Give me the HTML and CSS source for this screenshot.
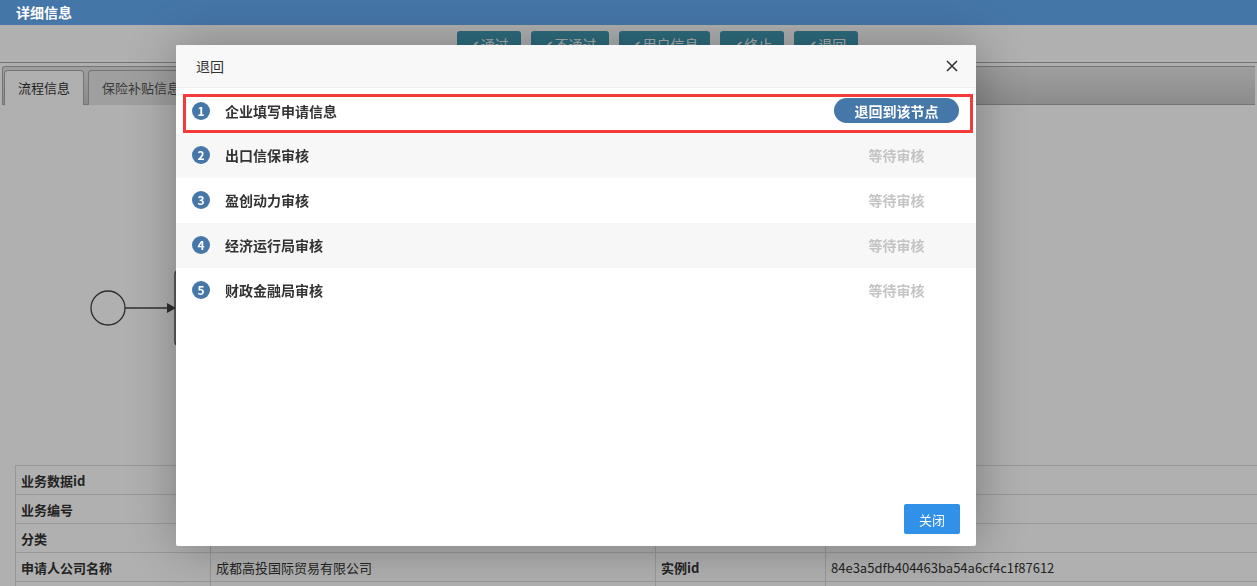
FILE: index.html
```html
<!DOCTYPE html>
<html lang="zh-CN">
<head>
  <meta charset="UTF-8">
  <title>详细信息</title>
  <link rel="stylesheet" href="styles.css">
</head>
<body>
  <div class="title-bar">详细信息</div>

  <div class="content">
    <div class="toolbar">
      <button class="tool-btn"><span class="tick">✔</span>通过</button>
      <button class="tool-btn"><span class="tick">✔</span>不通过</button>
      <button class="tool-btn"><span class="tick">✔</span>用户信息</button>
      <button class="tool-btn"><span class="tick">✔</span>终止</button>
      <button class="tool-btn"><span class="tick">✔</span>退回</button>
    </div>

    <div class="tabs">
      <ul class="tab-nav">
        <li class="tab active">流程信息</li>
        <li class="tab">保险补贴信息</li>
      </ul>
      <div class="tab-panel">
        <svg class="flow" viewBox="0 0 1253 360" width="1253" height="360">
          <circle cx="106" cy="203" r="17" fill="none" stroke="#444" stroke-width="1.3"/>
          <line x1="123" y1="203" x2="166" y2="203" stroke="#444" stroke-width="1.3"/>
          <polygon points="165,198 174,203 165,208" fill="#444"/>
          <rect x="173" y="165" width="120" height="76" rx="4" fill="#fff" stroke="#444" stroke-width="1.3"/>
        </svg>

        <table class="info">
          <tr>
            <th>业务数据id</th><td></td><th></th><td></td>
          </tr>
          <tr>
            <th>业务编号</th><td></td><th></th><td></td>
          </tr>
          <tr>
            <th>分类</th><td></td><th></th><td></td>
          </tr>
          <tr>
            <th>申请人公司名称</th><td>成都高投国际贸易有限公司</td><th>实例id</th><td>84e3a5dfb404463ba54a6cf4c1f87612</td>
          </tr>
          <tr>
            <th></th><td></td><th></th><td></td>
          </tr>
        </table>
      </div>
    </div>

    <div class="mask"></div>
  </div>

  <div class="modal">
    <div class="modal-header">
      <span class="modal-title">退回</span>
      <svg class="modal-close" viewBox="0 0 12 12" width="12" height="12">
        <path d="M1 1 L11 11 M11 1 L1 11" stroke="#333" stroke-width="1.6" fill="none"/>
      </svg>
    </div>

    <ul class="steps">
      <li class="step current">
        <span class="step-no">1</span>
        <span class="step-name">企业填写申请信息</span>
        <span class="step-side"><button class="back-btn">退回到该节点</button></span>
      </li>
      <li class="step">
        <span class="step-no">2</span>
        <span class="step-name">出口信保审核</span>
        <span class="step-side wait">等待审核</span>
      </li>
      <li class="step">
        <span class="step-no">3</span>
        <span class="step-name">盈创动力审核</span>
        <span class="step-side wait">等待审核</span>
      </li>
      <li class="step">
        <span class="step-no">4</span>
        <span class="step-name">经济运行局审核</span>
        <span class="step-side wait">等待审核</span>
      </li>
      <li class="step">
        <span class="step-no">5</span>
        <span class="step-name">财政金融局审核</span>
        <span class="step-side wait">等待审核</span>
      </li>
    </ul>

    <div class="modal-footer">
      <button class="close-btn">关闭</button>
    </div>
  </div>
</body>
</html>
```

FILE: styles.css
```css
* {
  margin: 0;
  padding: 0;
  box-sizing: border-box;
}

body {
  font-family: "Noto Sans CJK SC", "Noto Sans", "DejaVu Sans", sans-serif;
  color: #333;
  background-color: #fff;
  width: 1257px;
  height: 586px;
  overflow: hidden;
}

.title-bar {
  height: 25px;
  line-height: 25px;
  padding-left: 16px;
  background-color: #4576a8;
  color: #fff;
  font-size: 14px;
  font-weight: bold;
  position: relative;
  z-index: 3;
}

.content {
  position: relative;
  height: 561px;
}

.toolbar {
  height: 38px;
  display: flex;
  justify-content: center;
  gap: 10px;
  padding: 6px 0 0 58px;
  border-bottom: 1px solid #aaa;
}

.tool-btn {
  height: 26px;
  padding: 0 12px;
  border: none;
  border-radius: 3px;
  background-color: #429db7;
  color: #fff;
  font-family: inherit;
  font-size: 14px;
}

.tick {
  font-family: "DejaVu Sans", sans-serif;
  font-size: 13px;
  margin-right: 1px;
}

.tabs {
  margin: 3px 2px 0;
}

.tab-nav {
  list-style: none;
  display: flex;
  gap: 4px;
  height: 39px;
  padding: 3px 0 0 1px;
  border: 1px solid #aaa;
  border-right: none;
  border-radius: 3px 0 0 0;
  background: linear-gradient(#e6e6e6, #cacaca);
}

.tab {
  height: 35px;
  line-height: 33px;
  padding: 0 13px;
  border: 1px solid #aaa;
  border-bottom: none;
  border-radius: 4px 4px 0 0;
  background-color: #e6e6e6;
  color: #555;
  font-size: 13px;
}

.tab.active {
  background-color: #fff;
  color: #333;
}

.tab-panel {
  background-color: #fff;
}

.flow {
  display: block;
}

.info {
  margin-left: 13px;
  width: 1250px;
  border-collapse: collapse;
  font-size: 13px;
  color: #333;
}

.info th,
.info td {
  height: 29px;
  padding: 0 5px;
  border: 1px solid #ddd;
  text-align: left;
  white-space: nowrap;
}

.info th:nth-child(1) { width: 195px; }
.info td:nth-child(2) { width: 445px; }
.info th:nth-child(3) { width: 170px; }

.mask {
  position: absolute;
  inset: 0;
  background-color: rgba(0, 0, 0, 0.31);
}

/* dialog */
.modal {
  position: fixed;
  left: 176px;
  top: 45px;
  width: 800px;
  height: 501px;
  background-color: #fff;
  border-radius: 2px;
  box-shadow: 1px 1px 50px rgba(0, 0, 0, 0.3);
  display: flex;
  flex-direction: column;
  z-index: 5;
}

.modal-header {
  height: 43px;
  display: flex;
  align-items: center;
  justify-content: space-between;
  padding: 0 18px 0 20px;
  background-color: #f8f8f8;
  border-bottom: 1px solid #eee;
  border-radius: 2px 2px 0 0;
}

.modal-title {
  font-size: 14px;
  color: #333;
}

.steps {
  list-style: none;
  flex: 1;
}

.step {
  height: 45px;
  display: flex;
  align-items: center;
  padding: 0 17px 2px 16px;
  font-size: 14px;
}

.step:nth-child(even) {
  background-color: #f7f7f7;
}

.step.current {
  height: 39px;
  margin: 6px 3px 0 7px;
  padding: 0 11px 6px 6px;
  border: 3px solid #f53a3a;
}

.step-no {
  width: 18px;
  height: 18px;
  border-radius: 50%;
  background-color: #4577a9;
  color: #fff;
  font-size: 12px;
  font-weight: bold;
  display: flex;
  align-items: center;
  justify-content: center;
}

.step-name {
  flex: 1;
  margin-left: 15px;
  font-weight: bold;
  color: #333;
}

.step-side {
  width: 125px;
  text-align: center;
}

.wait {
  color: #c4c4c4;
  font-weight: bold;
}

.back-btn {
  width: 125px;
  height: 25px;
  border: none;
  border-radius: 13px;
  background-color: #4577a9;
  color: #fff;
  font-family: inherit;
  font-size: 14px;
  font-weight: bold;
}

.modal-footer {
  display: flex;
  justify-content: flex-end;
  padding: 0 16px 12px;
}

.close-btn {
  width: 56px;
  height: 30px;
  border: none;
  border-radius: 2px;
  background-color: #3191e8;
  color: #fff;
  font-family: inherit;
  font-size: 13px;
}
```
